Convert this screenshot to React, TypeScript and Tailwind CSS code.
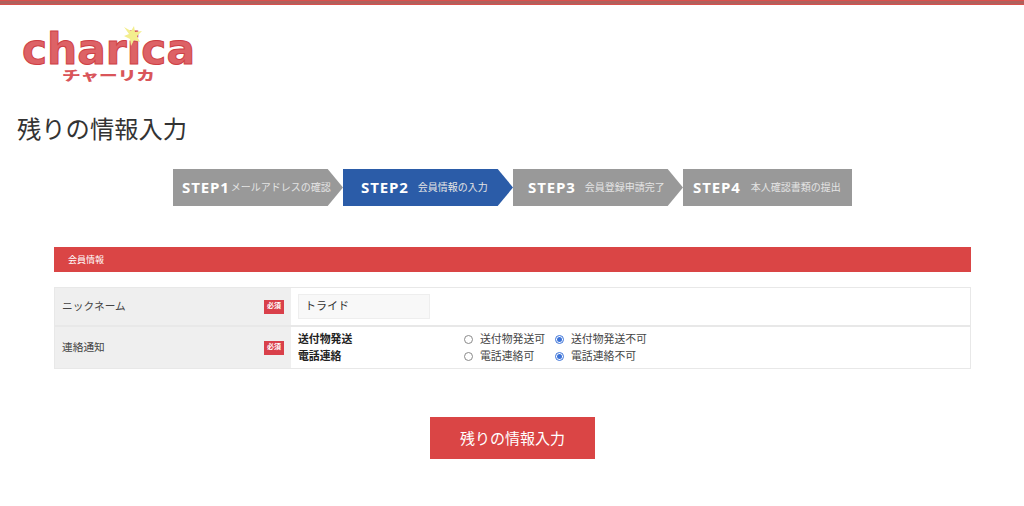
const jp = "font-['Noto_Sans','Noto_Sans_CJK_JP',sans-serif]";

const steps = [
  { no: "STEP1", label: "メールアドレスの確認", active: false, gap: "gap-[1px]", pl: "pl-[9px]", w: "w-[170px]", last: false },
  { no: "STEP2", label: "会員情報の入力", active: true, gap: "gap-[9px]", pl: "pl-[18px]", w: "w-[170px]", last: false },
  { no: "STEP3", label: "会員登録申請完了", active: false, gap: "gap-[9px]", pl: "pl-[15px]", w: "w-[170px]", last: false },
  { no: "STEP4", label: "本人確認書類の提出", active: false, gap: "gap-[10px]", pl: "pl-[10px]", w: "w-[169px]", last: true },
];

const Logo = () => (
  <svg width="180" height="60" viewBox="0 0 180 60" className="block overflow-visible">
    <text
      x="1"
      y="38"
      textLength="173"
      lengthAdjust="spacingAndGlyphs"
      fontFamily="DejaVu Sans"
      fontWeight="700"
      fontSize="43"
      fill="#dd6266"
      stroke="#cf3f45"
      strokeWidth="1"
      strokeLinejoin="miter"
    >
      charica
    </text>
    <polygon
      points="103,1 110,5 113,0 114,6 121,5 116,10 119,16 113,14 110,20 109,13 103,10 108,8"
      fill="#f3ee8e"
    />
    <text
      x="41"
      y="54"
      textLength="93"
      lengthAdjust="spacingAndGlyphs"
      fontFamily="Noto Sans CJK JP"
      fontWeight="900"
      fontSize="13"
      fill="#d9555a"
    >
      チャーリカ
    </text>
  </svg>
);

const Badge = () => (
  <span className="flex h-[14px] w-[20px] items-center justify-center bg-[#d9404a] text-[7px] font-bold text-white">
    必須
  </span>
);

const Radio = ({ label, checked }: { label: string; checked?: boolean }) => (
  <label className="flex items-center gap-[7px]">
    {checked ? (
      <span className="flex h-[9px] w-[9px] items-center justify-center rounded-full border border-[#3b73d9] bg-white">
        <span className="h-[5px] w-[5px] rounded-full bg-[#3b73d9]" />
      </span>
    ) : (
      <span className="h-[9px] w-[9px] rounded-full border border-[#8a8a8a] bg-white" />
    )}
    <span>{label}</span>
  </label>
);

export default function App() {
  return (
    <div className={`${jp} h-[506px] overflow-hidden bg-white text-[#333]`}>
      <div className="h-[5px] border-y border-[#d9504d] bg-[#b0605c]" />

      {/* logo */}
      <div className="pl-[21px] pt-[21px]">
        <Logo />
      </div>

      <h1 className="mt-[25px] pl-[17px] text-[24.3px] leading-[36px] text-[#333]">残りの情報入力</h1>

      {/* step bar */}
      <div className="mt-[22px] ml-[173px] flex h-[37px] w-[679px]">
        {steps.map((s) => (
          <div
            key={s.no}
            className={`flex h-full items-center ${s.w} ${s.gap} ${s.pl} ${
              s.active ? "bg-[#2b5ca8]" : "bg-[#999999]"
            } ${s.last ? "" : "[clip-path:polygon(0_0,91%_0,100%_50%,91%_100%,0_100%)]"}`}
          >
            <span className="font-['Open_Sans',sans-serif] text-[15px] font-bold tracking-[0.9px] text-white">
              {s.no}
            </span>
            <span className="text-[10px] whitespace-nowrap text-[#e4e4e4]">{s.label}</span>
          </div>
        ))}
      </div>

      <div className="mx-[54px] mt-[41px] w-[917px]">
        <div className="flex h-[25px] items-center bg-[#da4545] pl-[14px] text-[9px] text-white">会員情報</div>

        <div className="mt-[15px] border border-[#e8e8e8]">
          <div className="flex h-[39px] border-b-2 border-[#e8e8e8]">
            <div className="flex w-[236px] items-center justify-between bg-[#efefef] pr-[7px] pl-[7px] text-[10.7px] text-[#444]">
              ニックネーム
              <Badge />
            </div>
            <div className="flex items-center pl-[7px]">
              <div className="flex h-[25px] w-[132px] items-center border border-[#eeeeee] bg-[#f8f8f8] pl-[6px] text-[11px] text-[#333]">
                トライド
              </div>
            </div>
          </div>
          <div className="flex h-[41px]">
            <div className="flex w-[236px] items-center justify-between bg-[#efefef] pr-[7px] pl-[7px] text-[10.7px] text-[#444]">
              連絡通知
              <Badge />
            </div>
            <div className="flex flex-col justify-center gap-[1px] pl-[7px] text-[10.85px] leading-[16px]">
              <div className="flex">
                <span className="w-[166px] font-bold text-[#222]">送付物発送</span>
                <div className="flex w-[91px] text-[#444]">
                  <Radio label="送付物発送可" />
                </div>
                <div className="text-[#444]">
                  <Radio label="送付物発送不可" checked />
                </div>
              </div>
              <div className="flex">
                <span className="w-[166px] font-bold text-[#222]">電話連絡</span>
                <div className="flex w-[91px] text-[#444]">
                  <Radio label="電話連絡可" />
                </div>
                <div className="text-[#444]">
                  <Radio label="電話連絡不可" checked />
                </div>
              </div>
            </div>
          </div>
        </div>
      </div>

      <div className="mt-[48px] flex justify-center">
        <button className="ml-[1px] h-[42px] w-[165px] bg-[#da4545] text-[15px] text-white">残りの情報入力</button>
      </div>
    </div>
  );
}
